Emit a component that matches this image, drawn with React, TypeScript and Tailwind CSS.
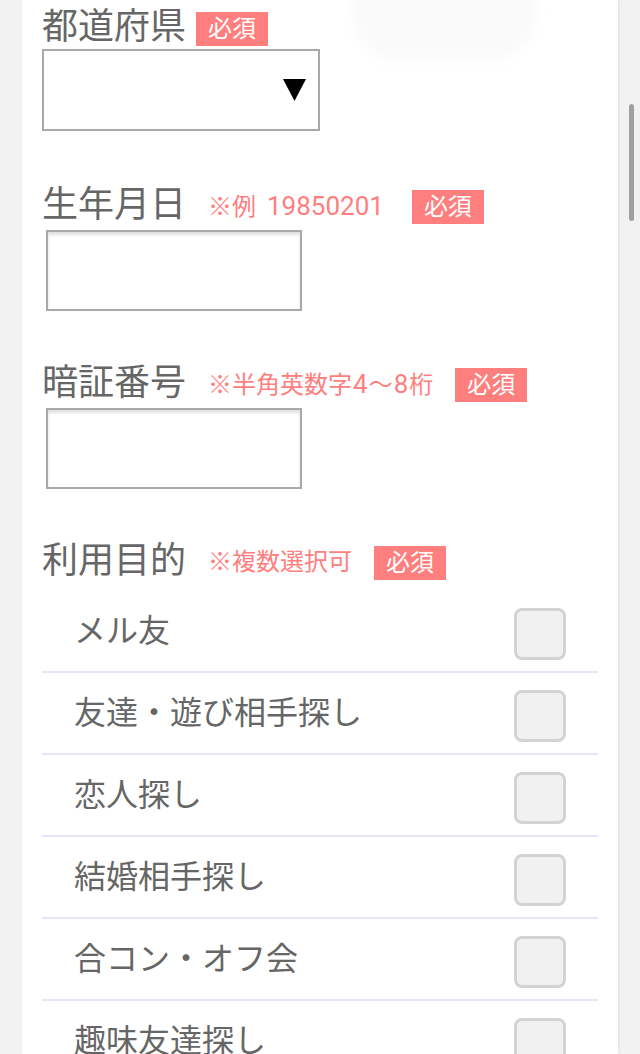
import React from "react";

const FONT = { fontFamily: 'Roboto, "Noto Sans CJK JP", sans-serif' };

function Badge() {
  return (
    <span className="inline-flex h-[34px] items-center bg-[#ff7e7e] px-[12px] text-[24px] leading-none text-white">
      必須
    </span>
  );
}

function LabelRow({ label, note }: { label: string; note?: React.ReactNode }) {
  return (
    <div className="flex h-[34px] items-center">
      <span className="text-[36px] leading-none text-[#666666] relative top-[-2px]">{label}</span>
      {note ? (
        <>
          <span className="ml-[22px] text-[24px] leading-none text-[#ff7e7e] relative top-[-1px]">{note}</span>
          <span className="ml-[22px]">
            <Badge />
          </span>
        </>
      ) : (
        <span className="ml-[10px]">
          <Badge />
        </span>
      )}
    </div>
  );
}

function TextBox() {
  return (
    <div className="ml-[4px] mt-[6px] h-[81px] w-[256px] border-2 border-[#a9a9a9] bg-white shadow-[inset_0_3px_3px_rgba(0,0,0,0.12)]" />
  );
}

const items = [
  "メル友",
  "友達・遊び相手探し",
  "恋人探し",
  "結婚相手探し",
  "合コン・オフ会",
  "趣味友達探し",
  "その他",
];

export default function App() {
  return (
    <div className="relative h-[1054px] w-[640px] overflow-hidden bg-[#f2f2f2]" style={FONT}>
      <div className="relative mx-[22px] h-[1054px] bg-white px-[20px] pt-[12px] shadow-[1px_0_3px_rgba(0,0,0,0.08)]">
        <div className="pointer-events-none absolute left-[330px] top-[-35px] h-[95px] w-[185px] rounded-full bg-[#fafafa] blur-[6px]" />

        <div className="relative h-[178px]">
          <LabelRow label="都道府県" />
          <div className="mt-[3px] flex h-[82px] w-[278px] items-center justify-end border-2 border-[#a9a9a9] bg-white pr-[12px]">
            <svg width="23" height="22" viewBox="0 0 23 22">
              <polygon points="0,0 23,0 11.5,22" fill="#000" />
            </svg>
          </div>
        </div>

        <div className="h-[178px]">
          <LabelRow
            label="生年月日"
            note={
              <>
                ※例 <span className="ml-[5px] mr-[6px] text-[26px]">19850201</span>
              </>
            }
          />
          <TextBox />
        </div>

        <div className="h-[178px]">
          <LabelRow
            label="暗証番号"
            note={
              <>
                ※半角英数字<span className="px-[1px] text-[26px]">4</span>〜<span className="px-[1px] text-[26px]">8</span>桁
              </>
            }
          />
          <TextBox />
        </div>

        <div>
          <LabelRow label="利用目的" note="※複数選択可" />
          <div className="mt-[11px]">
            {items.map((t) => (
              <div
                key={t}
                className="flex h-[82px] items-center justify-between border-b-2 border-[#e6e6fa] pl-[32px] pr-[32px]"
              >
                <span className="text-[32px] leading-none text-[#666666]">{t}</span>
                <span className="mt-[6px] h-[52px] w-[52px] rounded-[8px] border-[3px] border-[#d3d3d3] bg-[#f1f1f1]" />
              </div>
            ))}
          </div>
        </div>
      </div>
      <div className="absolute right-[6px] top-[104px] h-[117px] w-[5px] rounded-full bg-[#a0a0a0]" />
    </div>
  );
}
